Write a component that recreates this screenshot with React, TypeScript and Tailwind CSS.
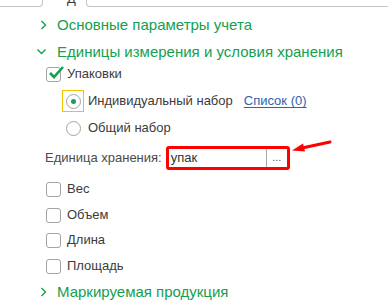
import React from "react";

const green = "#13a050";

function ChevronRight() {
  return (
    <svg width="16" height="10" viewBox="0 0 16 10" className="shrink-0">
      <path d="M 1.5 1 L 5.5 5 L 1.5 9" fill="none" stroke={green} strokeWidth="1.4" />
    </svg>
  );
}

function ChevronDown() {
  return (
    <svg width="16" height="10" viewBox="0 0 16 10" className="shrink-0">
      <path d="M 0.5 2.5 L 4.5 6.5 L 8.5 2.5" fill="none" stroke={green} strokeWidth="1.4" />
    </svg>
  );
}

function Header({ open, title, className = "" }: { open?: boolean; title: string; className?: string }) {
  return (
    <div className={`flex items-center h-[26px] ${className}`}>
      <div className={open ? "pl-[37px]" : "pl-[40px]"}>{open ? <ChevronDown /> : <ChevronRight />}</div>
      <span className={`text-[15px] text-[#13a050] ${open ? "ml-[4px]" : "ml-[1px]"}`}>{title}</span>
    </div>
  );
}

function CheckBox({ label, checked, className = "" }: { label: string; checked?: boolean; className?: string }) {
  return (
    <div className={`flex items-center pl-[46px] ${className}`}>
      <div className="relative w-[15px] h-[15px] border border-[#a3a3a3] rounded-[3px] bg-white shrink-0">
        {checked && (
          <svg width="18" height="16" viewBox="0 0 18 16" className="absolute left-[1px] top-[-3px]">
            <path d="M 2 8 L 6 12 L 15 2" fill="none" stroke="#16a050" strokeWidth="2.6" />
          </svg>
        )}
      </div>
      <span className="ml-[6px] text-[13px] text-[#3b3b3b]">{label}</span>
    </div>
  );
}

function Radio({ label, checked, focused, className = "" }: { label: string; checked?: boolean; focused?: boolean; className?: string }) {
  return (
    <div className={`flex items-center pl-[62px] ${className}`}>
      <div
        className={`w-[22px] h-[22px] flex items-center justify-center shrink-0 border ${
          focused ? "border-[#f2c300]" : "border-transparent"
        }`}
      >
        <div className="w-[15px] h-[15px] rounded-full border border-[#a3a3a3] bg-white flex items-center justify-center">
          {checked && <div className="w-[5px] h-[5px] rounded-full bg-[#16a050]" />}
        </div>
      </div>
      <span className="ml-[4px] text-[13px] text-[#3b3b3b]">{label}</span>
    </div>
  );
}

export default function App() {
  return (
    <div
      className="relative w-[388px] h-[300px] bg-white overflow-hidden"
      style={{ fontFamily: '"Liberation Sans", Arial, sans-serif' }}
    >
      {/* tab strip */}
      <div className="flex h-[7px]">
        <div className="w-[43px] h-[7px] border-r border-b border-[#c4c4c4] rounded-br-[4px]" />
        <div className="w-[43px] h-[7px] overflow-hidden relative">
          <span className="absolute left-[24px] top-[-11px] text-[13px] text-[#3b3b3b]">Д</span>
        </div>
        <div className="flex-1 h-[7px] border-l border-b border-[#c4c4c4] rounded-bl-[4px]" />
      </div>

      <Header title="Основные параметры учета" className="mt-[5px]" />
      <Header open title="Единицы измерения и условия хранения" className="mt-[1px]" />

      <CheckBox checked label="Упаковки" className="h-[18px]" />

      <div className="flex items-center h-[22px] mt-[7px]">
        <Radio checked focused label="Индивидуальный набор" />
        <a className="ml-[11px] text-[13px] text-[#2f63ad] underline underline-offset-2">Список (0)</a>
      </div>
      <Radio label="Общий набор" className="h-[22px] mt-[5px]" />

      <div className="flex items-center h-[24px] mt-[7px] pl-[45px]">
        <span className="text-[13px] text-[#4a4a4a]">Единица хранения:</span>
        <div className="ml-[4px] w-[124px] h-[24px] border-[3px] border-[#ff0000] rounded-[3px] flex bg-white">
          <span className="flex-1 text-[13px] text-[#333] pl-[2px] leading-[18px]">упак</span>
          <div className="w-[21px] border-l border-[#a8a8a8] flex items-center justify-center text-[11px] text-[#555] leading-none pb-[2px]">
            ...
          </div>
        </div>
      </div>

      <CheckBox label="Вес" className="h-[20px] mt-[9px]" />
      <CheckBox label="Объем" className="h-[20px] mt-[6px]" />
      <CheckBox label="Длина" className="h-[20px] mt-[5px]" />
      <CheckBox label="Площадь" className="h-[20px] mt-[6px]" />

      <Header title="Маркируемая продукция" className="mt-[3px]" />

      {/* red pointer arrow */}
      <svg className="absolute left-[288px] top-[136px]" width="50" height="20" viewBox="0 0 50 20">
        <path d="M 42 6 L 14 12" stroke="#ff0000" strokeWidth="3" strokeLinecap="round" />
        <path d="M 4 14.5 L 15 7.5 L 17 15.5 Z" fill="#ff0000" />
      </svg>
    </div>
  );
}
